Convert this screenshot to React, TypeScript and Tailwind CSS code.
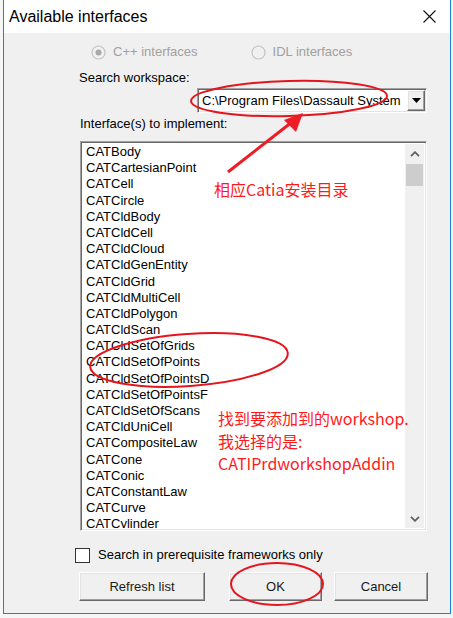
import React from 'react';

const items = [
  'CATBody',
  'CATCartesianPoint',
  'CATCell',
  'CATCircle',
  'CATCldBody',
  'CATCldCell',
  'CATCldCloud',
  'CATCldGenEntity',
  'CATCldGrid',
  'CATCldMultiCell',
  'CATCldPolygon',
  'CATCldScan',
  'CATCldSetOfGrids',
  'CATCldSetOfPoints',
  'CATCldSetOfPointsD',
  'CATCldSetOfPointsF',
  'CATCldSetOfScans',
  'CATCldUniCell',
  'CATCompositeLaw',
  'CATCone',
  'CATConic',
  'CATConstantLaw',
  'CATCurve',
  'CATCylinder',
];

const raised =
  'border border-t-white border-l-white border-b-[#696969] border-r-[#696969] shadow-[inset_-1px_-1px_0_#a0a0a0,inset_1px_1px_0_#e3e3e3]';
const sunken =
  'border border-t-[#a0a0a0] border-l-[#a0a0a0] border-b-white border-r-white shadow-[inset_1px_1px_0_#696969,inset_-1px_-1px_0_#e3e3e3]';

const Chevron = ({ up }: { up?: boolean }) => (
  <svg width="10" height="6" viewBox="0 0 10 6">
    <path
      d={up ? 'M1 5.2 L5 1.2 L9 5.2' : 'M1 0.8 L5 4.8 L9 0.8'}
      fill="none"
      stroke="#606060"
      strokeWidth="1.8"
    />
  </svg>
);

const Radio = ({ checked, label }: { checked?: boolean; label: string }) => (
  <div className="flex items-center gap-[7px]">
    <svg width="15" height="15" viewBox="0 0 15 15">
      <circle cx="7.5" cy="7.5" r="6.5" fill="#f0f0f0" stroke="#c4c4c4" strokeWidth="1.2" />
      {checked && <circle cx="7.5" cy="7.5" r="3" fill="#a8a8a8" />}
    </svg>
    <span className="text-[#a0a0a0]">{label}</span>
  </div>
);

const Button = ({ label, className }: { label: string; className: string }) => (
  <button className={`h-[29px] bg-[#f0f0f0] text-[13px] text-[#1a1a1a] ${raised} ${className}`}>
    {label}
  </button>
);

export default function App() {
  return (
    <div className="relative w-[453px] h-[618px] bg-[#f6f6f6] pl-[3px] font-['Liberation_Sans',Arial,sans-serif] text-[13px] text-black overflow-hidden">
      <div className="w-[448px] h-[614px] flex flex-col border-x border-b border-[#1883d7] bg-[#f0f0f0]">
        {/* title bar */}
        <div className="h-[33px] bg-white flex items-center justify-between pl-[5px] pr-[14px]">
          <span className="text-[16px] leading-none">Available interfaces</span>
          <svg width="13" height="13" viewBox="0 0 13 13">
            <path d="M0.5 0.5 L12.5 12.5 M12.5 0.5 L0.5 12.5" stroke="#111" strokeWidth="1.1" />
          </svg>
        </div>

        <div className="mt-[11px] ml-[87px] flex items-center h-[16px] leading-[16px]">
          <Radio checked label="C++ interfaces" />
          <div className="ml-[53px]">
            <Radio label="IDL interfaces" />
          </div>
        </div>

        <div className="mt-[10px] ml-[75px] h-[16px] leading-[16px]">Search workspace:</div>

        <div className={`mt-[2px] ml-[193px] w-[230px] h-[25px] bg-white flex items-center ${sunken}`}>
          <span className="flex-1 pl-[4px] whitespace-nowrap overflow-hidden leading-[16px]">
            C:\Program Files\Dassault System
          </span>
          <div className={`w-[18px] h-[21px] mr-[1px] bg-[#f0f0f0] flex items-center justify-center ${raised}`}>
            <svg width="9" height="5" viewBox="0 0 9 5">
              <path d="M0 0 L9 0 L4.5 5 Z" fill="#000" />
            </svg>
          </div>
        </div>

        <div className="mt-[3px] ml-[76px] h-[16px] leading-[16px]">Interface(s) to implement:</div>

        <div className={`mt-[9px] ml-[76px] w-[347px] h-[390px] bg-white flex p-[2px] ${sunken}`}>
          <div className="flex-1 overflow-hidden pl-[3px]">
            {items.map((name) => (
              <div key={name} className="h-[16.2px] leading-[16.2px] whitespace-nowrap">
                {name}
              </div>
            ))}
          </div>
          <div className="w-[19px] bg-[#f0f0f0] flex flex-col">
            <div className="h-[20px] flex items-center justify-center">
              <Chevron up />
            </div>
            <div className="mx-[1px] h-[22px] bg-[#cdcdcd]" />
            <div className="flex-1" />
            <div className="h-[19px] flex items-center justify-center">
              <Chevron />
            </div>
          </div>
        </div>

        <div className="mt-[16px] ml-[71px] flex items-center h-[16px] leading-[16px]">
          <div className="w-[15px] h-[15px] bg-white border border-[#333]" />
          <span className="ml-[8px]">Search in prerequisite frameworks only</span>
        </div>

        <div className="mt-[9px] ml-[75px] flex">
          <Button label="Refresh list" className="w-[126px]" />
          <Button label="OK" className="ml-[24px] w-[93px]" />
          <Button label="Cancel" className="ml-[12px] w-[94px]" />
        </div>
      </div>

      {/* red annotations */}
      <svg className="absolute inset-0 pointer-events-none" width="453" height="618" viewBox="0 0 453 618">
        <ellipse cx="289" cy="98.5" rx="98" ry="17.5" fill="none" stroke="#e3161e" strokeWidth="2" transform="rotate(-1.5 289 98.5)" />
        <ellipse cx="189" cy="360" rx="99" ry="26" fill="none" stroke="#e3161e" strokeWidth="2" transform="rotate(-4 189 360)" />
        <ellipse cx="277" cy="584" rx="46" ry="21" fill="none" stroke="#e3161e" strokeWidth="2" />
        <line x1="228" y1="172" x2="292" y2="122" stroke="#ee1c24" strokeWidth="3" />
        <path d="M303 113 L284 120 L296 132 Z" fill="#ee1c24" />
      </svg>

      <div className="absolute left-[214px] top-[178px] text-[16px] leading-[22px] text-[#ff1a1a] font-['Noto_Sans_CJK_SC',sans-serif] whitespace-nowrap">
        相应Catia安装目录
      </div>
      <div className="absolute left-[218px] top-[407px] text-[16px] leading-[22.5px] text-[#ff1a1a] font-['Noto_Sans_CJK_SC',sans-serif] whitespace-nowrap">
        <div>找到要添加到的workshop.</div>
        <div>我选择的是:</div>
        <div>CATIPrdworkshopAddin</div>
      </div>
    </div>
  );
}
